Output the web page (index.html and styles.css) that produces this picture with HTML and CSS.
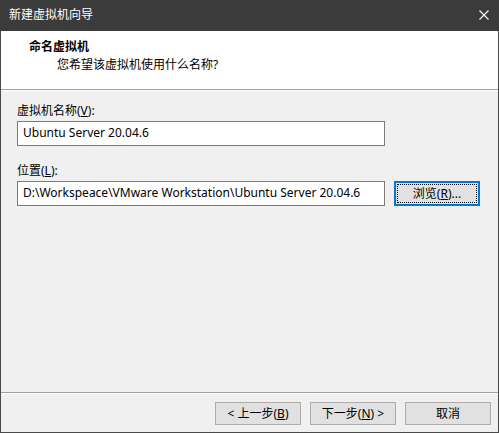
FILE: index.html
```html
<!DOCTYPE html>
<html lang="zh-CN">
<head>
<meta charset="utf-8">
<title>新建虚拟机向导</title>
<link rel="stylesheet" href="styles.css">
</head>
<body>
<div class="window">
  <div class="titlebar">
    <span class="title">新建虚拟机向导</span>
    <svg class="close" width="10" height="10" viewBox="0 0 10 10"><path d="M0.5 0.5 L9.5 9.5 M9.5 0.5 L0.5 9.5" stroke="#ffffff" stroke-width="1.1" fill="none"/></svg>
  </div>
  <div class="frame">
    <div class="header">
      <div class="h-title">命名虚拟机</div>
      <div class="h-sub">您希望该虚拟机使用什么名称?</div>
    </div>
    <div class="content">
      <div class="label">虚拟机名称(<u>V</u>):</div>
      <div class="row">
        <div class="input">Ubuntu Server 20.04.6</div>
      </div>
      <div class="label second">位置(<u>L</u>):</div>
      <div class="row">
        <div class="input">D:\Workspeace\VMware Workstation\Ubuntu Server 20.04.6</div>
        <div class="btn default"><span class="focus">浏览(<u>R</u>)...</span></div>
      </div>
    </div>
    <div class="footer">
      <div class="btn">&lt; 上一步(<u>B</u>)</div>
      <div class="btn">下一步(<u>N</u>) &gt;</div>
      <div class="btn">取消</div>
    </div>
  </div>
</div>
</body>
</html>
```
FILE: styles.css
```css
* { box-sizing: border-box; }
html, body { margin: 0; padding: 0; }
body {
  background: #f0f0f0;
  font-family: "Noto Sans", "Noto Sans CJK SC", sans-serif;
  font-size: 12px;
  color: #000;
}
.window {
  width: 499px;
  height: 433px;
  display: flex;
  flex-direction: column;
}
.titlebar {
  height: 31px;
  background: #3b3b3b;
  display: flex;
  align-items: center;
  justify-content: space-between;
  padding: 0 10px 1px 9px;
  color: #ffffff;
  flex: none;
}
.title { line-height: 16px; }
.frame {
  flex: 1;
  display: flex;
  flex-direction: column;
  border: 1px solid #4a4a4a;
  border-top: none;
  background: #f0f0f0;
}
.header {
  height: 59px;
  background: #ffffff;
  border-bottom: 1px solid #a0a0a0;
  box-shadow: 0 1px 0 #ffffff;
  padding: 8px 0 0 28px;
  flex: none;
}
.h-title {
  font-weight: bold;
  line-height: 16px;
}
.h-sub {
  line-height: 16px;
  margin-top: 2px;
  padding-left: 28px;
}
.content {
  flex: 1;
  padding: 13px 16px 0 16px;
}
.label { line-height: 16px; }
.label.second { margin-top: 17px; }
.row {
  display: flex;
  gap: 9px;
  margin-top: 2px;
}
.input {
  width: 368px;
  height: 25px;
  background: #ffffff;
  border: 1px solid #7a7a7a;
  padding: 0 5px;
  line-height: 22px;
  white-space: nowrap;
  overflow: hidden;
}
.footer {
  flex: none;
  height: 40px;
  border-top: 1px solid #a0a0a0;
  box-shadow: inset 0 1px 0 #ffffff;
  display: flex;
  justify-content: flex-end;
  gap: 9px;
  padding: 9px 7px 0 0;
}
.btn {
  width: 86px;
  height: 23px;
  background: #e1e1e1;
  border: 1px solid #adadad;
  display: flex;
  align-items: center;
  justify-content: center;
  line-height: 16px;
}
.row .btn { height: 25px; }
.btn.default {
  border: 2px solid #0078d7;
  padding: 1px;
}
.focus {
  flex: 1;
  align-self: stretch;
  display: flex;
  align-items: center;
  justify-content: center;
  border: 1px dotted #000000;
}
u { text-underline-offset: 1px; }
```
